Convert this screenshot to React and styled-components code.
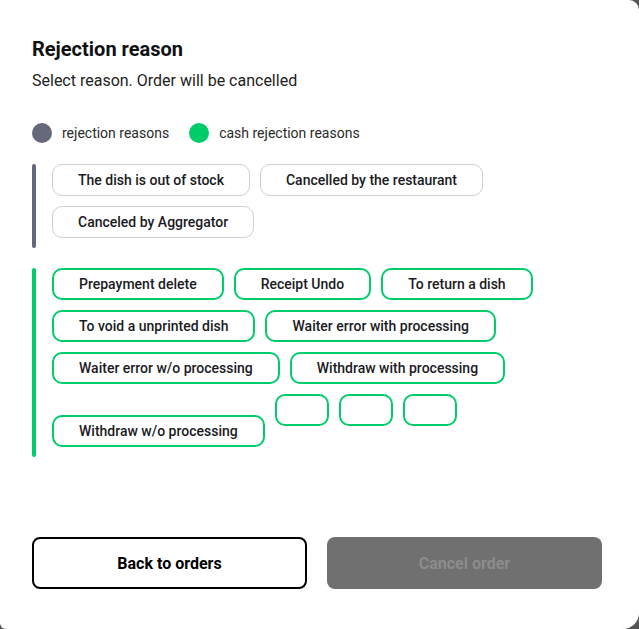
import React from "react"
import styled, { createGlobalStyle } from "styled-components"

const GRAY = "#666979"
const GREEN = "#00cc6a"
const TEXT = "#1b1b1f"

const GlobalStyle = createGlobalStyle`
  html, body {
    margin: 0;
    padding: 0;
    background: #555555;
  }
  body {
    font-family: "Roboto", "Liberation Sans", sans-serif;
    color: ${TEXT};
  }
`

const Modal = styled.div`
  box-sizing: border-box;
  width: 639px;
  height: 629px;
  background: #ffffff;
  border-radius: 0 10px 16px 6px;
  padding: 37px 37px 40px 32px;
  display: flex;
  flex-direction: column;
`

const Title = styled.h2`
  margin: 0;
  font-size: 20px;
  font-weight: 700;
  line-height: 24px;
  color: #111;
`

const Subtitle = styled.p`
  margin: 10px 0 0;
  font-size: 16px;
  line-height: 20px;
  color: #222;
`

const Legend = styled.div`
  display: flex;
  align-items: center;
  gap: 10px;
  margin-top: 32px;
  font-size: 14px;
  color: #2a2a2a;
`

const LegendItem = styled.div`
  display: flex;
  align-items: center;
  gap: 10px;
  margin-right: 10px;
`

const Dot = styled.span`
  width: 20px;
  height: 20px;
  border-radius: 50%;
  background: ${(p) => p.$color};
`

const Group = styled.div`
  display: flex;
  margin-top: ${(p) => p.$top}px;
`

const Bar = styled.div`
  width: 4px;
  border-radius: 2px;
  background: ${(p) => p.$color};
  margin-right: 16px;
  flex-shrink: 0;
`

const Chips = styled.div`
  flex: 1;
  line-height: 0;
`

const Chip = styled.div`
  display: inline-block;
  box-sizing: border-box;
  height: 32px;
  min-width: 54px;
  margin: 0 10px 10px 0;
  padding: 0 25px;
  border: ${(p) => (p.$cash ? `2px solid ${GREEN}` : "1px solid #cfcfd4")};
  border-radius: 10px;
  background: #fff;
  font-size: 14px;
  font-weight: 500;
  line-height: ${(p) => (p.$cash ? 28 : 30)}px;
  color: ${TEXT};
  vertical-align: baseline;
  cursor: pointer;
`

const Footer = styled.div`
  display: grid;
  grid-template-columns: 1fr 1fr;
  gap: 20px;
  margin-top: auto;
`

const FooterButton = styled.button`
  height: 52px;
  box-sizing: border-box;
  border-radius: 8px;
  font-family: "Roboto", "Liberation Sans", sans-serif;
  font-size: 16px;
  font-weight: 700;
  border: ${(p) => (p.$primary ? "none" : "2px solid #000")};
  background: ${(p) => (p.$primary ? "#707070" : "#fff")};
  color: ${(p) => (p.$primary ? "#8c8c8c" : "#000")};
`

const rejection = ["The dish is out of stock", "Cancelled by the restaurant", "Canceled by Aggregator"]

const cash = [
  "Prepayment delete",
  "Receipt Undo",
  "To return a dish",
  "To void a unprinted dish",
  "Waiter error with processing",
  "Waiter error w/o processing",
  "Withdraw with processing",
  "Withdraw w/o processing",
  "",
  "",
  "",
]

const App = () => (
  <>
    <GlobalStyle />
    <Modal>
      <Title>Rejection reason</Title>
      <Subtitle>Select reason. Order will be cancelled</Subtitle>
      <Legend>
        <LegendItem>
          <Dot $color={GRAY} />
          rejection reasons
        </LegendItem>
        <LegendItem>
          <Dot $color={GREEN} />
          cash rejection reasons
        </LegendItem>
      </Legend>
      <Group $top={21}>
        <Bar $color={GRAY} />
        <Chips>
          {rejection.map((r) => (
            <Chip key={r} role="button">
              {r}
            </Chip>
          ))}
        </Chips>
      </Group>
      <Group $top={20}>
        <Bar $color={GREEN} />
        <Chips>
          {cash.map((r, i) => (
            <Chip key={i} role="button" $cash>
              {r}
            </Chip>
          ))}
        </Chips>
      </Group>
      <Footer>
        <FooterButton>Back to orders</FooterButton>
        <FooterButton $primary disabled>
          Cancel order
        </FooterButton>
      </Footer>
    </Modal>
  </>
)

export default App
